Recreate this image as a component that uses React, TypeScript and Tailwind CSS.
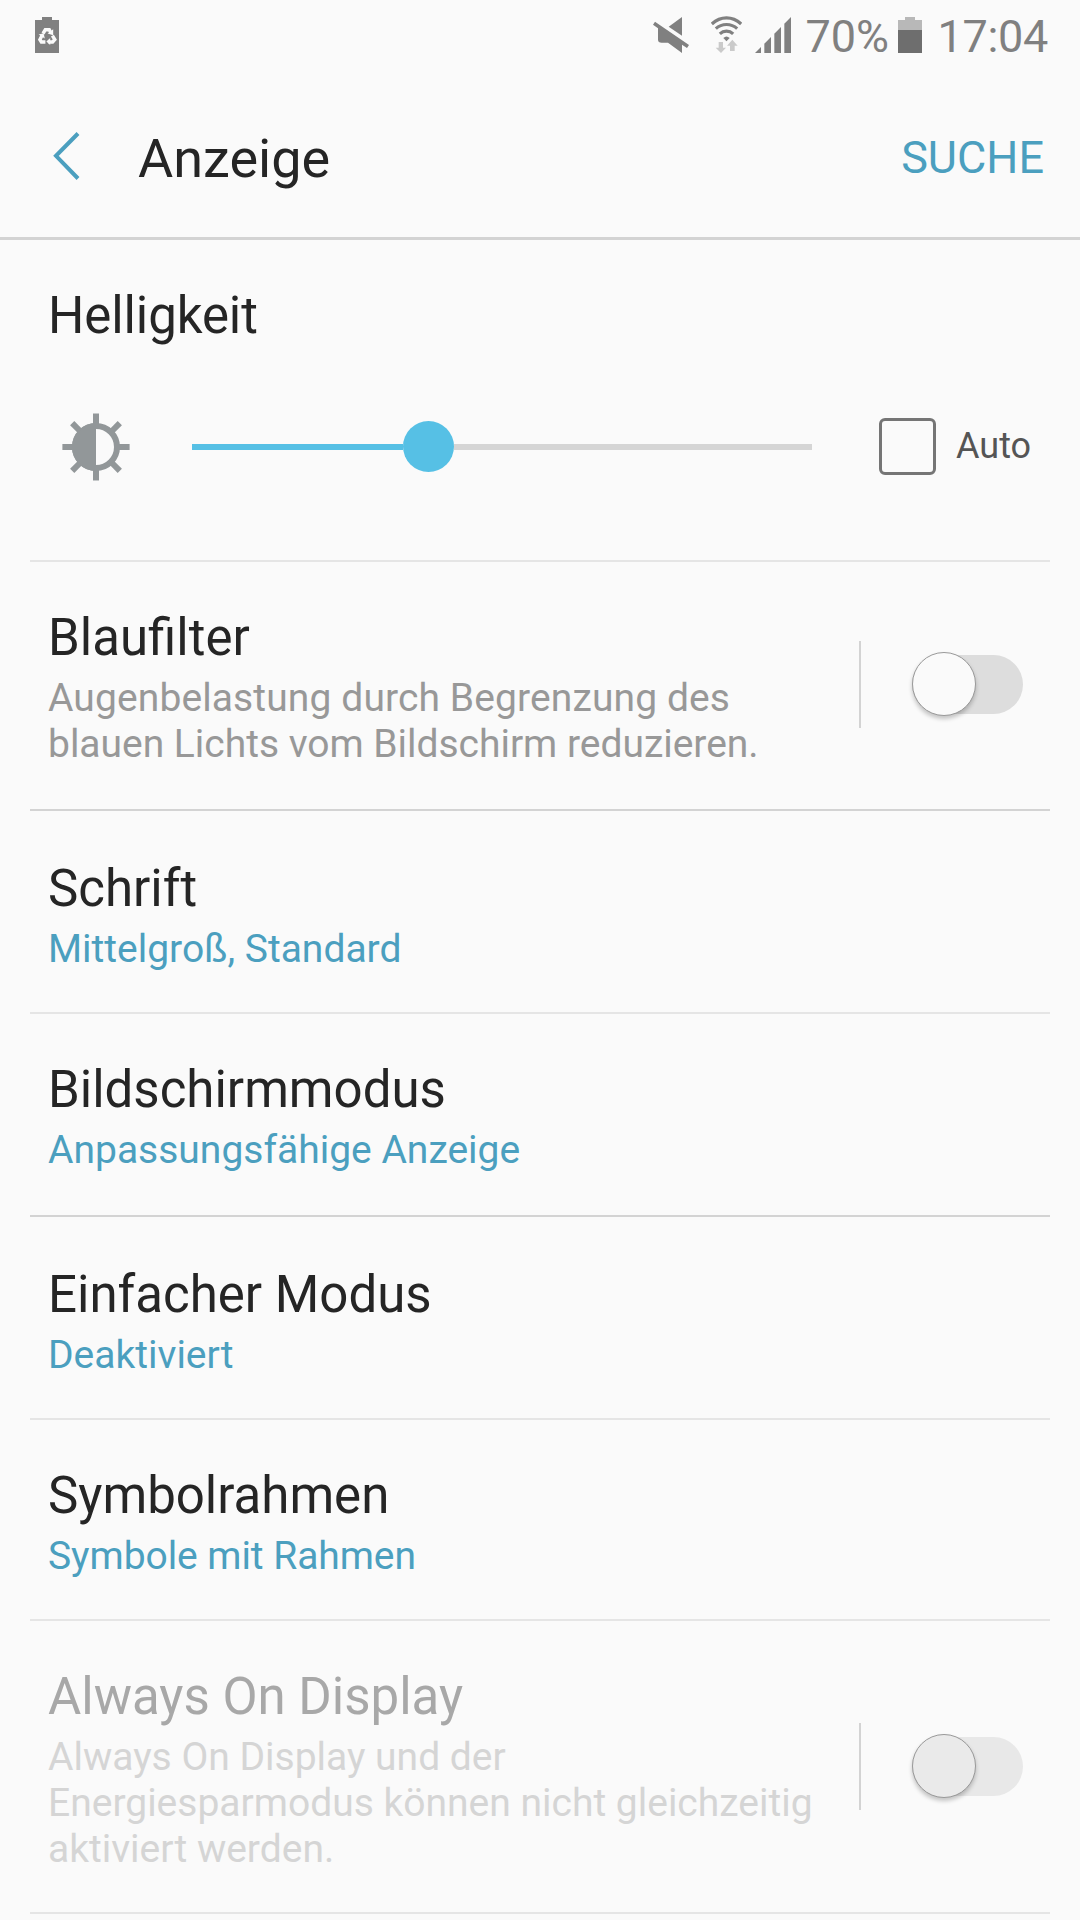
import type { ReactNode } from "react";

function RecycleBattery() {
  return (
    <svg className="h-9 w-6" viewBox="0 0 24 36">
      <path d="M0 3H7V0H17V3H24V36H0Z" fill="#808080" />
      <g fill="none" stroke="#fafafa" strokeWidth="3.4">
        <path d="M8 16.5 10.3 12.8H14.3L16 16" />
        <path d="M17.4 18.6 19.8 22.6 17.6 25H13.5" />
        <path d="M10.4 25H6.4L4.9 22.6 7 18.5" />
      </g>
      <g fill="#fafafa">
        <path d="M18.2 12.3V18.2L12.6 16.6Z" />
        <path d="M15.2 21V28L11.4 24.6Z" />
        <path d="M3.6 17.6 8.6 16.3 9.8 21.4Z" />
      </g>
    </svg>
  );
}

function MuteIcon() {
  return (
    <svg className="h-9 w-9" viewBox="0 0 108 108" fill="#808080">
      <path d="M47 29 87 0V56Z" />
      <path d="M6 14 108 84 102 93 87 83V108L45 77H26Q15 77 15 68V34L0 23Z" />
    </svg>
  );
}

function WifiIcon() {
  return (
    <svg className="h-[37px] w-[31px]" viewBox="0 0 93 111">
      <g fill="none" stroke="#808080" strokeWidth="9.500">
        <path d="M2.500 24Q22 5.500 46.500 5.500T90.500 24" />
        <path d="M14.500 38Q28 25.500 46.500 25.500T78.500 38" />
        <path d="M26.500 53.500Q35 45.500 46.500 45.500T66.500 53.500" />
      </g>
      <path d="M37 66Q46.500 57 56 66L46.500 75.500Z" fill="#808080" />
      <path d="M23 78H36V95H45L30 111 14 95H23Z" fill="#cacaca" />
      <path d="M57 105V89H48L64 71 80 89H71V105Z" fill="#cacaca" />
    </svg>
  );
}

function SignalIcon() {
  return (
    <svg className="h-9 w-9" viewBox="0 0 108 108" fill="#808080">
      <path d="M0 108 18 90V108Z" />
      <path d="M28 80 48 60V108H28Z" />
      <path d="M58 50 78 30V108H58Z" />
      <path d="M88 20 108 0V108H88Z" />
    </svg>
  );
}

function BatteryIcon() {
  return (
    <svg className="h-9 w-6" viewBox="0 0 24 36">
      <path d="M0 3H7V0H17V3H24V13H0Z" fill="#b8b8b8" />
      <path d="M0 13H24V36H0Z" fill="#6e6e6e" />
    </svg>
  );
}

function BrightnessIcon() {
  return (
    <svg className="h-17 w-17" viewBox="-34 -34 68 68" fill="none" stroke="#929799" strokeWidth="6">
      <circle r="21" />
      <path d="M0-24A24 24 0 0 0 0 24Z" fill="#929799" stroke="none" />
      <path d="M0-33.600V-22M0 22V33.600M-33.600 0H-22M22 0H33.600M-23.800-23.800-16-16M16 16 23.800 23.800M-23.800 23.800-16 16M16-16 23.800-23.800" />
    </svg>
  );
}

function Toggle({ disabled = false }: { disabled?: boolean }) {
  return (
    <div className="flex h-[87px] shrink-0 items-center border-l-2 border-[#d3d3d3] pl-[51px]">
      <div className={`flex h-[59px] w-[111px] items-center rounded-full ${disabled ? "bg-[#e8e8e8]" : "bg-[#dddddd]"}`}>
        <div
          className={`mb-px h-16 w-16 shrink-0 rounded-full border border-[#999999] shadow-[0_3px_4px_rgba(0,0,0,0.22)] ${disabled ? "bg-[#eaeaea]" : "bg-[#fafafa]"}`}
        />
      </div>
    </div>
  );
}

type RowProps = {
  title: string;
  size: string;
  children: ReactNode;
  tone?: "link" | "info" | "disabled";
  toggle?: string;
};

const tones = {
  link: "text-[#4b9fbf]",
  info: "text-[#989898]",
  disabled: "text-[#d5d5d5]",
};

function Row({ title, size, children, tone = "link", toggle }: RowProps) {
  return (
    <section className={`mx-[30px] flex justify-between border-b-2 pl-[18px] pr-[27px] ${size}`}>
      <div className="whitespace-nowrap">
        <h2 className={`text-[51px] leading-[60px] ${tone === "disabled" ? "text-[#a8a8a8]" : "text-[#252525]"}`}>{title}</h2>
        <p className={`mt-[7px] text-[39px] leading-[46px] ${tones[tone]}`}>{children}</p>
      </div>
      {toggle && (
        <div className={toggle}>
          <Toggle disabled={tone === "disabled"} />
        </div>
      )}
    </section>
  );
}

export default function App() {
  return (
    <main className="h-[1920px] w-[1080px] overflow-hidden bg-[#fafafa] font-['Roboto',sans-serif] text-[#252525]">
      <div className="flex h-[72px] items-start justify-between pl-[35px] pr-[32px] text-[45px] leading-[52px] text-[#808080]">
        <div className="pt-[17px]">
          <RecycleBattery />
        </div>
        <div className="flex pt-[17px]">
          <MuteIcon />
          <div className="-mt-px ml-[22px]">
            <WifiIcon />
          </div>
          <div className="ml-[13px]">
            <SignalIcon />
          </div>
          <span className="-mt-[6px] ml-[14px] w-[84px]">70%</span>
          <div className="ml-[9px]">
            <BatteryIcon />
          </div>
          <span className="-mt-[6px] ml-[15px] tracking-[-0.3px]">17:04</span>
        </div>
      </div>

      <header className="flex h-[168px] items-start border-b-[3px] border-[#d3d3d3] pl-[53px] pr-[36px]">
        <svg className="mt-[60px] h-12 w-[27px]" viewBox="0 0 27 48" fill="none" stroke="#4b9fbf" strokeWidth="4">
          <path d="M25 1.500 3 23.800 25 46.500" />
        </svg>
        <h1 className="ml-[58px] mt-[55px] text-[54px] leading-[64px]">Anzeige</h1>
        <button className="ml-auto mt-[59px] text-[45px] leading-[53px] text-[#4b9fbf]">SUCHE</button>
      </header>

      <section className="mx-[30px] h-[322px] border-b-2 border-[#e5e5e5] pl-[18px] pt-[46px]">
        <h2 className="text-[51px] leading-[60px] tracking-[-0.1px]">Helligkeit</h2>
        <div className="mt-[67px] flex h-[68px] items-center pl-[14px]">
          <BrightnessIcon />
          <div className="ml-[62px] flex h-[52px] w-[620px] items-center">
            <div className="h-[6px] w-[211px] bg-[#56c0e5]" />
            <div className="mb-px h-[51px] w-[51px] shrink-0 rounded-full bg-[#56c0e5]" />
            <div className="h-[6px] grow bg-[#d5d5d5]" />
          </div>
          <div className="mb-px ml-[67px] h-[57px] w-[57px] rounded-[6px] border-[3px] border-[#757575]" />
          <span className="mb-[2px] ml-5 text-[36px] leading-[42px] text-[#555555]">Auto</span>
        </div>
      </section>

      <Row title="Blaufilter" size="h-[249px] pt-[46px] border-[#d3d3d3]" tone="info" toggle="pt-[33px]">
        <span className="tracking-[0.11px]">Augenbelastung durch Begrenzung des</span>
        <br />
        <span className="tracking-[-0.02px]">blauen Lichts vom Bildschirm reduzieren.</span>
      </Row>
      <Row title="Schrift" size="h-[203px] pt-[48px] border-[#e5e5e5]">Mittelgroß, Standard</Row>
      <Row title="Bildschirmmodus" size="h-[203px] pt-[46px] border-[#d3d3d3]">Anpassungsfähige Anzeige</Row>
      <Row title="Einfacher Modus" size="h-[203px] pt-[48px] border-[#e5e5e5]">Deaktiviert</Row>
      <Row title="Symbolrahmen" size="h-[201px] pt-[46px] border-[#e5e5e5]">
        <span className="tracking-[-0.06px]">Symbole mit Rahmen</span>
      </Row>
      <Row title="Always On Display" size="h-[293px] pt-[46px] border-[#e5e5e5]" tone="disabled" toggle="pt-[56px]">
        Always On Display und der
        <br />
        Energiesparmodus können nicht gleichzeitig
        <br />
        aktiviert werden.
      </Row>
    </main>
  );
}
